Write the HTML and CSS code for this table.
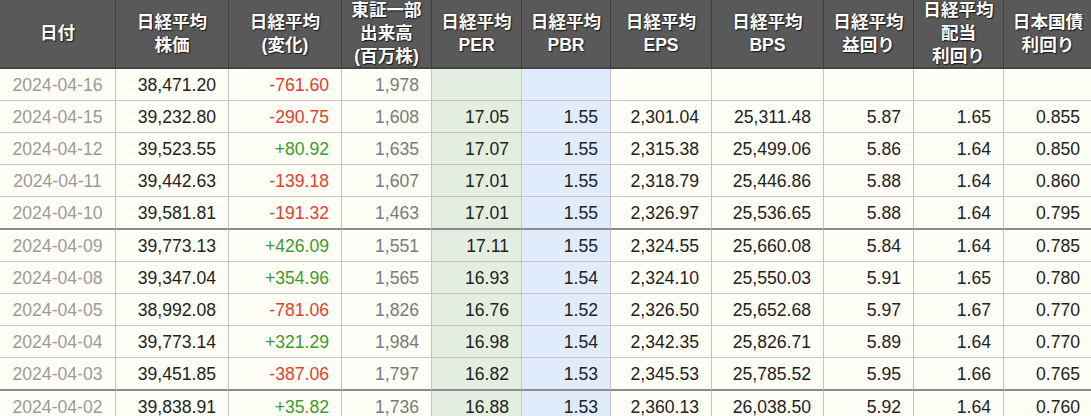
FILE: index.html
```html
<!DOCTYPE html>
<html lang="ja">
<head>
<meta charset="utf-8">
<title>日経平均</title>
<link rel="stylesheet" href="styles.css">
</head>
<body>
<table class="grid">
<colgroup>
<col class="c0"><col class="c1"><col class="c2"><col class="c3"><col class="c4"><col class="c5"><col class="c6"><col class="c7"><col class="c8"><col class="c9"><col class="c10">
</colgroup>
<thead>
<tr>
<th><div class="h">日付</div></th>
<th><div class="h"><span>日経平均</span><span>株価</span></div></th>
<th><div class="h"><span>日経平均</span><span>(変化)</span></div></th>
<th><div class="h"><span>東証一部</span><span>出来高</span><span>(百万株)</span></div></th>
<th><div class="h"><span>日経平均</span><span>PER</span></div></th>
<th><div class="h"><span>日経平均</span><span>PBR</span></div></th>
<th><div class="h"><span>日経平均</span><span>EPS</span></div></th>
<th><div class="h"><span>日経平均</span><span>BPS</span></div></th>
<th><div class="h"><span>日経平均</span><span>益回り</span></div></th>
<th><div class="h"><span>日経平均</span><span>配当</span><span>利回り</span></div></th>
<th><div class="h"><span>日本国債</span><span>利回り</span></div></th>
</tr>
</thead>
<tbody>
<tr><td class="d">2024-04-16</td><td>38,471.20</td><td class="dn">-761.60</td><td class="v">1,978</td><td class="per"></td><td class="pbr"></td><td></td><td></td><td></td><td></td><td></td></tr>
<tr><td class="d">2024-04-15</td><td>39,232.80</td><td class="dn">-290.75</td><td class="v">1,608</td><td class="per">17.05</td><td class="pbr">1.55</td><td>2,301.04</td><td>25,311.48</td><td>5.87</td><td>1.65</td><td>0.855</td></tr>
<tr><td class="d">2024-04-12</td><td>39,523.55</td><td class="up">+80.92</td><td class="v">1,635</td><td class="per">17.07</td><td class="pbr">1.55</td><td>2,315.38</td><td>25,499.06</td><td>5.86</td><td>1.64</td><td>0.850</td></tr>
<tr><td class="d">2024-04-11</td><td>39,442.63</td><td class="dn">-139.18</td><td class="v">1,607</td><td class="per">17.01</td><td class="pbr">1.55</td><td>2,318.79</td><td>25,446.86</td><td>5.88</td><td>1.64</td><td>0.860</td></tr>
<tr class="wk"><td class="d">2024-04-10</td><td>39,581.81</td><td class="dn">-191.32</td><td class="v">1,463</td><td class="per">17.01</td><td class="pbr">1.55</td><td>2,326.97</td><td>25,536.65</td><td>5.88</td><td>1.64</td><td>0.795</td></tr>
<tr><td class="d">2024-04-09</td><td>39,773.13</td><td class="up">+426.09</td><td class="v">1,551</td><td class="per">17.11</td><td class="pbr">1.55</td><td>2,324.55</td><td>25,660.08</td><td>5.84</td><td>1.64</td><td>0.785</td></tr>
<tr><td class="d">2024-04-08</td><td>39,347.04</td><td class="up">+354.96</td><td class="v">1,565</td><td class="per">16.93</td><td class="pbr">1.54</td><td>2,324.10</td><td>25,550.03</td><td>5.91</td><td>1.65</td><td>0.780</td></tr>
<tr><td class="d">2024-04-05</td><td>38,992.08</td><td class="dn">-781.06</td><td class="v">1,826</td><td class="per">16.76</td><td class="pbr">1.52</td><td>2,326.50</td><td>25,652.68</td><td>5.97</td><td>1.67</td><td>0.770</td></tr>
<tr><td class="d">2024-04-04</td><td>39,773.14</td><td class="up">+321.29</td><td class="v">1,984</td><td class="per">16.98</td><td class="pbr">1.54</td><td>2,342.35</td><td>25,826.71</td><td>5.89</td><td>1.64</td><td>0.770</td></tr>
<tr class="wk"><td class="d">2024-04-03</td><td>39,451.85</td><td class="dn">-387.06</td><td class="v">1,797</td><td class="per">16.82</td><td class="pbr">1.53</td><td>2,345.53</td><td>25,785.52</td><td>5.95</td><td>1.66</td><td>0.765</td></tr>
<tr><td class="d">2024-04-02</td><td>39,838.91</td><td class="up">+35.82</td><td class="v">1,736</td><td class="per">16.88</td><td class="pbr">1.53</td><td>2,360.13</td><td>26,038.50</td><td>5.92</td><td>1.64</td><td>0.760</td></tr>
</tbody>
</table>
</body>
</html>
```
FILE: styles.css
```css
html, body {
  margin: 0;
  padding: 0;
  background: #fffff7;
  overflow: hidden;
}
.grid {
  border-collapse: separate;
  border-spacing: 0;
  table-layout: fixed;
  width: 1093px;
  font-family: "Liberation Sans", Arial, "Noto Sans CJK JP", sans-serif;
  font-size: 17.6px;
  color: #222;
  background: #fffff7;
}
.c0 { width: 116px; }
.c1 { width: 113px; }
.c2 { width: 113px; }
.c3 { width: 90px; }
.c4 { width: 90px; }
.c5 { width: 89px; }
.c6 { width: 101px; }
.c7 { width: 112px; }
.c8 { width: 90px; }
.c9 { width: 90px; }
.c10 { width: 89px; }
.grid th {
  padding: 0;
  background: #595959;
  border-right: 1px solid #404040;
  border-bottom: 2px solid #444;
  color: #fff;
  font-family: "Liberation Sans", Arial, "Noto Sans CJK JP", sans-serif;
  font-weight: bold;
  font-size: 17.6px;
  text-shadow: 1px 1px 1px #1a1a1a, 0 0 2px #333;
}
.h {
  height: 67px;
  display: flex;
  flex-direction: column;
  justify-content: center;
  align-items: center;
  line-height: 23px;
  white-space: nowrap;
}
.grid td {
  height: 31px;
  padding: 0 12px 0 0;
  text-align: right;
  border-right: 1px solid #c4c4c4;
  border-bottom: 1px solid #c4c4c4;
  line-height: 20px;
  white-space: nowrap;
  overflow: hidden;
  vertical-align: middle;
}
.grid tr.wk td {
  border-bottom: 2px solid #8c8c8c;
}
.grid td.d {
  text-align: center;
  padding: 0;
  color: #9a9a9a;
}
.grid td.v { color: #7a7a7a; }
.grid td.dn { color: #e2402f; }
.grid td.up { color: #3e9a2c; }
.grid td.per { background: #e3eee0; }
.grid td.pbr { background: #e0ebfc; }
```
